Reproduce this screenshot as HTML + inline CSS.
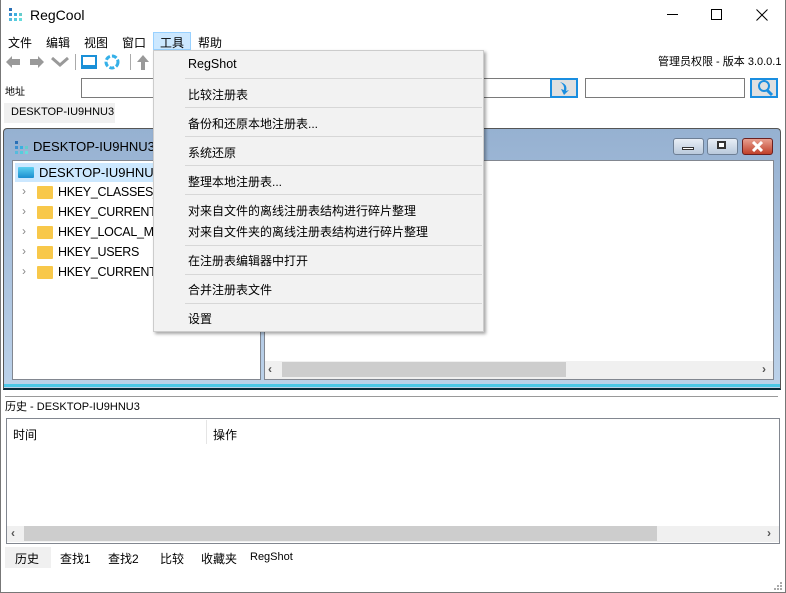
<!DOCTYPE html>
<html><head><meta charset="utf-8"><style>
*{margin:0;padding:0;box-sizing:border-box}
body{width:786px;height:593px;overflow:hidden;background:#fff;font-family:"Liberation Sans","Noto Sans CJK SC",sans-serif;font-size:12px;color:#000;position:relative}
.a{position:absolute;white-space:nowrap}
.sep{position:absolute;left:31px;width:297px;height:1px;background:#d7d7d7}
.mi{position:absolute;left:34px;font-size:12px}
.tree div{position:absolute;left:0;font-size:12px}
</style></head><body>
<div class="a" style="left:0;top:0;width:786px;height:593px;border:1px solid #777;border-top:none"></div>
<!-- title -->
<svg class="a" style="left:9px;top:8px" width="14" height="14"><rect x="0" y="0" width="3" height="3" fill="#2a6fb5"/><rect x="5" y="5" width="3" height="3" fill="#3ab0e0"/><rect x="0" y="5" width="3" height="3" fill="#3b8fd0"/><rect x="10" y="5" width="3" height="3" fill="#6cc"/><rect x="0" y="10" width="3" height="3" fill="#5bd"/><rect x="5" y="10" width="3" height="3" fill="#5cd"/><rect x="10" y="10" width="3" height="3" fill="#6dd"/></svg>
<div class="a" style="left:30px;top:7px;font-size:14px">RegCool</div>
<div class="a" style="left:667px;top:14px;width:11px;height:1px;background:#000"></div>
<div class="a" style="left:711px;top:9px;width:11px;height:11px;border:1px solid #000"></div>
<svg class="a" style="left:756px;top:9px" width="12" height="12"><path d="M0.5 0.5L11.5 11.5M11.5 0.5L0.5 11.5" stroke="#000"/></svg>
<!-- menu bar -->
<div class="a" style="left:153px;top:32px;width:38px;height:18px;background:#cce8ff;border:1px solid #99d1ff"></div>
<div class="a" style="left:8px;top:34px">文件</div>
<div class="a" style="left:46px;top:34px">编辑</div>
<div class="a" style="left:84px;top:34px">视图</div>
<div class="a" style="left:122px;top:34px">窗口</div>
<div class="a" style="left:160px;top:34px">工具</div>
<div class="a" style="left:198px;top:34px">帮助</div>
<!-- toolbar -->
<svg class="a" style="left:4px;top:53px" width="150" height="18"><path d="M2 9L8 3V6H16V12H8V15Z" fill="#999"/><path d="M40 9L34 3V6H26V12H34V15Z" fill="#999"/><path d="M48 5L56 12L64 5" stroke="#999" stroke-width="3" fill="none"/><rect x="71" y="1" width="1" height="16" fill="#aaa"/><rect x="78" y="3" width="14" height="10" fill="none" stroke="#1a90d8" stroke-width="2"/><rect x="77" y="14" width="16" height="2" fill="#1a90d8"/><circle cx="108" cy="9" r="6" fill="none" stroke="#35b0e8" stroke-width="3" stroke-dasharray="5 2"/><rect x="126" y="1" width="1" height="16" fill="#aaa"/><path d="M139 2L145 9H141V17H137V9H133Z" fill="#999"/></svg>
<div class="a" style="left:658px;top:53px;font-size:11px">管理员权限 - 版本 3.0.0.1</div>
<div class="a" style="left:5px;top:83px;font-size:10px">地址</div>
<div class="a" style="left:81px;top:78px;width:470px;height:20px;border:1px solid #7a7a7a"></div>
<div class="a" style="left:550px;top:78px;width:28px;height:20px;border:2px solid #1a8ee0;background:#e0e0e0"></div>
<svg class="a" style="left:557px;top:81px" width="14" height="14"><path d="M3 1Q11 3 9 10L12 9L7 14L4 8L7 9Q8 4 3 1Z" fill="#1a8ee0"/></svg>
<div class="a" style="left:585px;top:78px;width:160px;height:20px;border:1px solid #7a7a7a"></div>
<div class="a" style="left:750px;top:78px;width:28px;height:20px;border:2px solid #1a8ee0;background:#e0e0e0"></div>
<svg class="a" style="left:756px;top:80px" width="18" height="16"><circle cx="8" cy="6" r="5" stroke="#1a8ee0" stroke-width="2" fill="none"/><path d="M11 10L16 15" stroke="#1a8ee0" stroke-width="3"/></svg>
<div class="a" style="left:4px;top:103px;width:111px;height:20px;background:#f0f0f0"></div>
<div class="a" style="left:11px;top:106px;font-size:11px">DESKTOP-IU9HNU3</div>
<!-- MDI child -->
<div class="a" style="left:3px;top:128px;width:778px;height:262px;background:linear-gradient(#96b1d1,#bcd2ea);border:1px solid #555;border-bottom:2px solid #0a2a3a;border-radius:4px 4px 0 0"></div>
<div class="a" style="left:4px;top:384px;width:776px;height:3px;background:#4cc8e8"></div>
<svg class="a" style="left:15px;top:141px" width="14" height="14"><rect x="0" y="0" width="3" height="3" fill="#2a6fb5"/><rect x="5" y="5" width="3" height="3" fill="#3ab0e0"/><rect x="0" y="5" width="3" height="3" fill="#3b8fd0"/><rect x="10" y="5" width="3" height="3" fill="#6cc"/><rect x="0" y="10" width="3" height="3" fill="#5bd"/><rect x="5" y="10" width="3" height="3" fill="#5cd"/><rect x="10" y="10" width="3" height="3" fill="#6dd"/></svg>
<div class="a" style="left:33px;top:139px;font-size:13px">DESKTOP-IU9HNU3</div>
<div class="a" style="left:673px;top:138px;width:31px;height:17px;border:1px solid #6d7f95;border-radius:3px;background:linear-gradient(#e8eef6,#b9c9dc)"></div>
<div class="a" style="left:682px;top:147px;width:12px;height:3px;background:#fff;border:1px solid #333"></div>
<div class="a" style="left:707px;top:138px;width:31px;height:17px;border:1px solid #6d7f95;border-radius:3px;background:linear-gradient(#e8eef6,#b9c9dc)"></div>
<div class="a" style="left:717px;top:141px;width:9px;height:8px;border:2px solid #333;background:#fff"></div>
<div class="a" style="left:742px;top:138px;width:31px;height:17px;border:1px solid #6b2020;border-radius:3px;background:linear-gradient(#e8a090,#c0402a)"></div>
<svg class="a" style="left:751px;top:141px" width="13" height="11"><path d="M2 1L11 10M11 1L2 10" stroke="#fff" stroke-width="3"/></svg>
<div class="a" style="left:12px;top:160px;width:249px;height:220px;background:#fff;border:1px solid #828790"></div>
<div class="a" style="left:264px;top:160px;width:510px;height:220px;background:#fff;border:1px solid #828790"></div>
<div class="a" style="left:265px;top:361px;width:508px;height:18px;background:#f0f0f0"></div>
<div class="a" style="left:282px;top:362px;width:284px;height:15px;background:#cdcdcd"></div>
<div class="a" style="left:268px;top:362px;font-size:12px;color:#555;font-weight:bold">‹</div>
<div class="a" style="left:762px;top:362px;font-size:12px;color:#555;font-weight:bold">›</div>
<div class="a" style="left:15px;top:163px;width:140px;height:19px;background:#cce8ff"></div>
<div class="a" style="left:18px;top:167px;width:16px;height:11px;background:linear-gradient(#5cd0f0,#1a8ed0);border-radius:1px"></div>
<div class="a" style="left:39px;top:165px;font-size:13px">DESKTOP-IU9HNU3</div>
<div class="tree">
<div style="left:22px;top:184px;color:#888">›</div><div style="left:37px;top:186px;width:16px;height:13px;background:#f8c84a;border-radius:1px"></div><div style="left:58px;top:185px;font-size:12.5px;letter-spacing:-0.3px">HKEY_CLASSES_R</div>
<div style="left:22px;top:204px;color:#888">›</div><div style="left:37px;top:206px;width:16px;height:13px;background:#f8c84a;border-radius:1px"></div><div style="left:58px;top:205px;font-size:12.5px;letter-spacing:-0.3px">HKEY_CURRENT_</div>
<div style="left:22px;top:224px;color:#888">›</div><div style="left:37px;top:226px;width:16px;height:13px;background:#f8c84a;border-radius:1px"></div><div style="left:58px;top:225px;font-size:12.5px;letter-spacing:-0.3px">HKEY_LOCAL_MA</div>
<div style="left:22px;top:244px;color:#888">›</div><div style="left:37px;top:246px;width:16px;height:13px;background:#f8c84a;border-radius:1px"></div><div style="left:58px;top:245px;font-size:12.5px;letter-spacing:-0.3px">HKEY_USERS</div>
<div style="left:22px;top:264px;color:#888">›</div><div style="left:37px;top:266px;width:16px;height:13px;background:#f8c84a;border-radius:1px"></div><div style="left:58px;top:265px;font-size:12.5px;letter-spacing:-0.3px">HKEY_CURRENT_</div>
</div>
<!-- history -->
<div class="a" style="left:5px;top:396px;width:773px;height:1px;background:#999"></div>
<div class="a" style="left:5px;top:398px;font-size:11px">历史 - DESKTOP-IU9HNU3</div>
<div class="a" style="left:6px;top:418px;width:774px;height:126px;border:1px solid #828790"></div>
<div class="a" style="left:13px;top:426px">时间</div>
<div class="a" style="left:206px;top:420px;width:1px;height:24px;background:#e5e5e5"></div>
<div class="a" style="left:213px;top:426px">操作</div>
<div class="a" style="left:7px;top:526px;width:772px;height:16px;background:#f0f0f0"></div>
<div class="a" style="left:24px;top:526px;width:633px;height:15px;background:#cdcdcd"></div>
<div class="a" style="left:11px;top:526px;color:#555;font-weight:bold">‹</div>
<div class="a" style="left:767px;top:526px;color:#555;font-weight:bold">›</div>
<div class="a" style="left:5px;top:547px;width:46px;height:21px;background:#f0f0f0"></div>
<div class="a" style="left:15px;top:550px">历史</div>
<div class="a" style="left:60px;top:550px">查找1</div>
<div class="a" style="left:108px;top:550px">查找2</div>
<div class="a" style="left:160px;top:550px">比较</div>
<div class="a" style="left:201px;top:550px">收藏夹</div>
<div class="a" style="left:250px;top:551px;font-size:11px">RegShot</div>
<!-- dropdown -->
<div class="a" style="left:153px;top:50px;width:331px;height:282px;background:#f2f2f2;border:1px solid #ccc;box-shadow:2px 2px 3px rgba(0,0,0,.35)">
<div class="mi" style="top:6px;font-size:12.5px">RegShot</div>
<div class="sep" style="top:27px"></div>
<div class="mi" style="top:35px">比较注册表</div>
<div class="sep" style="top:56px"></div>
<div class="mi" style="top:64px">备份和还原本地注册表...</div>
<div class="sep" style="top:85px"></div>
<div class="mi" style="top:93px">系统还原</div>
<div class="sep" style="top:114px"></div>
<div class="mi" style="top:122px">整理本地注册表...</div>
<div class="sep" style="top:143px"></div>
<div class="mi" style="top:151px">对来自文件的离线注册表结构进行碎片整理</div>
<div class="mi" style="top:172px">对来自文件夹的离线注册表结构进行碎片整理</div>
<div class="sep" style="top:194px"></div>
<div class="mi" style="top:201px">在注册表编辑器中打开</div>
<div class="sep" style="top:223px"></div>
<div class="mi" style="top:230px">合并注册表文件</div>
<div class="sep" style="top:252px"></div>
<div class="mi" style="top:259px">设置</div>
</div>
<svg class="a" style="left:774px;top:582px" width="9" height="9"><g fill="#aaa"><rect x="6" y="0" width="2" height="2"/><rect x="3" y="3" width="2" height="2"/><rect x="6" y="3" width="2" height="2"/><rect x="0" y="6" width="2" height="2"/><rect x="3" y="6" width="2" height="2"/><rect x="6" y="6" width="2" height="2"/></g></svg>
</body></html>
